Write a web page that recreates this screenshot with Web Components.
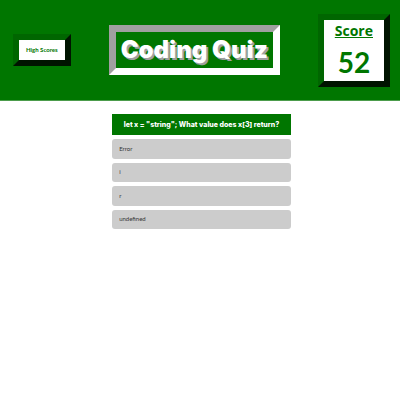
<!DOCTYPE html>
<html lang="en">
<head>
<meta charset="utf-8">
<title>Coding Quiz</title>
<style>
body { margin: 0; background: #fff; color: #007600; font-family: Lato, sans-serif; }
</style>
</head>
<body>
<quiz-header>
  <high-scores-button>High Scores</high-scores-button>
  <quiz-title>Coding Quiz</quiz-title>
  <score-board label="Score">52</score-board>
</quiz-header>
<quiz-card>
  <span slot="question">let x = "string"; What value does x[3] return?</span>
  <quiz-option>Error</quiz-option>
  <quiz-option>i</quiz-option>
  <quiz-option>r</quiz-option>
  <quiz-option>undefined</quiz-option>
</quiz-card>
<script>
function define(name, markup) {
  const template = document.createElement('template');
  template.innerHTML = markup;
  customElements.define(name, class extends HTMLElement {
    constructor() {
      super();
      this.attachShadow({ mode: 'open' }).append(template.content.cloneNode(true));
    }
    connectedCallback() {
      const label = this.shadowRoot.querySelector('.label');
      if (label) label.textContent = this.getAttribute('label');
    }
  });
}
define('quiz-header', `<style>
  :host { display: block; }
  header { display: flex; justify-content: space-between; align-items: center; box-sizing: border-box; min-height: 101px; padding: 0 10px 0 13px; background: #007600; border-bottom: 1px solid #4c9c4c; }
</style><header><slot></slot></header>`);
define('high-scores-button', `<style>
  :host { display: block; }
  button { display: block; box-sizing: border-box; padding: 6px 7px; border: 6px solid; border-color: #006600 #001400 #001400 #006600; background: #fff; color: #007600; font: 700 6px/8px Lato, sans-serif; white-space: nowrap; cursor: pointer; }
</style><button type="button"><slot></slot></button>`);
define('quiz-title', `<style>
  :host { display: block; }
  h1 { margin: 0; padding: 5px; border: 7px solid; border-color: #a0a0a0 #fff #fff #a0a0a0; color: #fff; font: 900 24px/26px Inter, sans-serif; text-shadow: 2px 2px #a0a0a0; white-space: nowrap; }
</style><h1><slot></slot></h1>`);
define('score-board', `<style>
  :host { display: block; }
  section { display: flex; flex-direction: column; align-items: center; gap: 6px; box-sizing: border-box; padding: 2px 11px 0; min-height: 73px; border: 6px solid; border-color: #006600 #001400 #001400 #006600; background: #fff; }
  h2 { margin: 0; font: 700 14px/18px "Open Sans", sans-serif; text-decoration: underline; }
  output { font: 700 28px/32px Lato, sans-serif; }
</style><section><h2 class="label"></h2><output><slot></slot></output></section>`);
define('quiz-card', `<style>
  :host { display: block; padding-left: 3px; }
  main { display: grid; gap: 4px; width: 45%; margin: 13px auto 0; }
  h2 { margin: 0; padding: 6px 4px 5px; background: #007600; color: #fff; font: 800 7px/10px Inter, sans-serif; text-align: center; white-space: nowrap; }
  .options { display: grid; grid-auto-rows: 1fr; gap: 4px; min-height: 90px; }
</style><main><h2><slot name="question"></slot></h2><div class="options"><slot></slot></div></main>`);
define('quiz-option', `<style>
  :host { display: grid; }
  button { padding: 0 7px; border: 0; border-radius: 3px; background: #ccc; color: #333; font: 6px/8px Lato, sans-serif; text-align: left; cursor: pointer; }
</style><button type="button"><slot></slot></button>`);
</script>
</body>
</html>
